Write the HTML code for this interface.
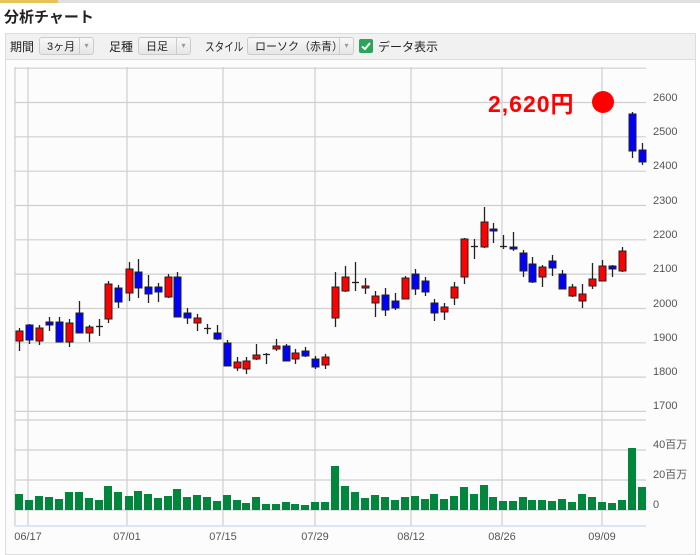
<!DOCTYPE html>
<html><head><meta charset="utf-8"><style>
body{margin:0;width:700px;height:548px;background:#fff;font-family:"Liberation Sans","Noto Sans CJK JP",sans-serif;overflow:hidden;position:relative}
.topbar{position:absolute;left:0;top:0;width:700px;height:3px;background:#e0e0e0}
.topbar i{position:absolute;left:0;top:0;width:58px;height:3px;background:#e8c35a}
h1{position:absolute;left:4px;top:6px;margin:0;font-size:15px;font-weight:bold;color:#222}
.panel{position:absolute;left:5px;top:33px;width:689px;height:520px;border:1px solid #ddd;background:#fcfcfc}
.tb{position:absolute;left:0;top:0;width:689px;height:25px;background:#f1f1f1;border-bottom:1px solid #ddd;font-size:12px;color:#222}
.tb span{position:absolute;top:4px;white-space:nowrap}
.dd{position:absolute;top:3px;height:18px;border:1px solid #ccc;border-radius:3px;background:linear-gradient(#f8f8f8,#e6e6e6);font-size:11px;line-height:18px;padding-left:7px;box-sizing:border-box;color:#222;white-space:nowrap}
.dd b{position:absolute;right:0;top:0;width:14px;height:16px;font-weight:normal;color:#999;font-size:8px;text-align:center;border-left:1px solid #ccc;box-sizing:border-box;line-height:16px}
.cb{position:absolute;left:353px;top:5px;width:14px;height:14px;background:#2aa55a;border-radius:2px}
</style></head><body>
<div class="topbar"><i></i></div>
<h1>分析チャート</h1>
<div class="panel">
<div class="tb">
<span style="left:4px">期間</span>
<div class="dd" style="left:33px;width:55px">3ヶ月<b>▾</b></div>
<span style="left:103px">足種</span>
<div class="dd" style="left:132px;width:53px">日足<b>▾</b></div>
<span style="left:199px;transform:scaleX(0.8);transform-origin:0 0">スタイル</span>
<div class="dd" style="left:241px;width:107px">ローソク（赤青）<b>▾</b></div>
<div class="cb"><svg width="14" height="14"><path d="M3 7.5 L6 10 L11 4" stroke="#fff" stroke-width="2" fill="none"/></svg></div>
<span style="left:372px">データ表示</span>
</div>
</div>
<svg id="c" width="700" height="548" style="position:absolute;left:0;top:0" font-family="Liberation Sans, sans-serif" font-size="11" fill="#555">
<g id="grid" stroke="#cfcfcf" stroke-width="1.2"></g>
<line x1="15" y1="526" x2="646" y2="526" stroke="#cfe0ee" stroke-width="1.5"/>
<g id="bars"></g>
<text x="653" y="101">2600</text><text x="653" y="135">2500</text><text x="653" y="169">2400</text>
<text x="653" y="204">2300</text><text x="653" y="238">2200</text><text x="653" y="272">2100</text>
<text x="653" y="307">2000</text><text x="653" y="341">1900</text><text x="653" y="375">1800</text>
<text x="653" y="409">1700</text>
<text x="653" y="448" font-family="Liberation Sans, Noto Sans CJK JP, sans-serif">40百万</text>
<text x="653" y="478" font-family="Liberation Sans, Noto Sans CJK JP, sans-serif">20百万</text>
<text x="653" y="508">0</text>
<text x="28" y="540" text-anchor="middle">06/17</text><text x="127" y="540" text-anchor="middle">07/01</text>
<text x="223" y="540" text-anchor="middle">07/15</text><text x="315" y="540" text-anchor="middle">07/29</text>
<text x="411" y="540" text-anchor="middle">08/12</text><text x="502" y="540" text-anchor="middle">08/26</text>
<text x="602" y="540" text-anchor="middle">09/09</text>
<text x="488" y="112" fill="#f00" font-size="23" font-weight="bold" letter-spacing="1" font-family="Liberation Sans, Noto Sans CJK JP, sans-serif">2,620円</text>
<circle cx="603" cy="102" r="11" fill="#f00"/>
</svg>
<script>
var ns="http://www.w3.org/2000/svg",g=document.getElementById('grid'),b=document.getElementById('bars');
function el(p,t,a){var e=document.createElementNS(ns,t);for(var k in a)e.setAttribute(k,a[k]);p.appendChild(e);return e;}
[68.2,102.5,136.8,171.2,205.5,239.8,274.1,308.5,342.8,377.1,411.4,420,450,480,510].forEach(function(y){el(g,'line',{x1:15,x2:646,y1:y,y2:y});});
[28,127,223,315,411,502,602].forEach(function(x){el(g,'line',{x1:x,x2:x,y1:67,y2:526});});
el(g,'line',{x1:15,x2:15,y1:67,y2:526});
var d=[[19,331,341,328,351,'r'],[29,325,340,324,344,'b'],[39,328,341,325,345,'r'],[49,322,325,317,331,'b'],[59,322,342,317,342,'b'],[69,323,342,319,347,'r'],[79,313,333,301,333,'b'],[89,327,333,325,342,'r'],[99,326,326,319,336,'x'],[108,284,319,281,323,'r'],[118,288,302,285,308,'b'],[129,269,293,262,301,'r'],[138,272,288,259,298,'b'],[148,287,294,275,303,'b'],[158,287,292,283,302,'b'],[168,277,297,274,298,'r'],[177,277,317,272,317,'b'],[187,313,318,308,324,'b'],[197,318,323,314,331,'r'],[207,328,328,324,334,'x'],[217,333,339,325,340,'b'],[227,343,366,340,366,'b'],[237,362,368,357,371,'r'],[246,361,369,357,374,'r'],[256,355,359,344,360,'r'],[266,354,354,353,364,'x'],[276,346,349,339,351,'r'],[286,346,361,344,361,'b'],[295,353,359,349,364,'r'],[305,351,356,347,357,'b'],[315,359,367,356,369,'b'],[325,357,365,354,369,'r'],[335,287,318,272,327,'r'],[345,277,291,266,292,'r'],[355,282,282,262,291,'x'],[365,286,287,278,294,'r'],[375,296,303,291,317,'r'],[385,295,310,288,316,'b'],[395,301,308,293,310,'b'],[405,278,299,276,299,'r'],[415,274,289,269,295,'b'],[425,281,292,277,296,'b'],[434,303,313,299,321,'b'],[444,307,312,303,320,'r'],[454,287,298,282,305,'r'],[464,239,277,238,284,'r'],[474,246,246,239,259,'x'],[484,222,247,207,248,'r'],[493,229,231,223,243,'b'],[503,246,246,235,249,'x'],[513,247,249,232,251,'b'],[523,253,271,250,277,'b'],[532,264,282,257,283,'b'],[542,267,277,265,287,'r'],[552,261,268,255,276,'b'],[562,274,289,270,289,'b'],[572,287,296,284,297,'r'],[582,294,301,284,308,'r'],[592,279,286,263,289,'r'],[602,266,281,260,281,'r'],[612,266,269,265,277,'b'],[622,251,271,247,272,'r'],[632,114,151,112,158,'b'],[642,150,162,143,165,'b']];
var v=[494,500,496,497,499,492,492,498,500,486,492,496,491,494,498,496,489,497,495,497,501,495,500,503,497,504,504,502,504,505,502,502,466,486,492,498,495,497,500,497,496,499,494,499,496,487,494,485,497,501,501,497,500,500,501,499,502,494,497,502,503,500,448,487];
d.forEach(function(c,i){var x=c[0];
el(b,'rect',{x:x-4,y:v[i],width:8,height:510-v[i],fill:'#00873c'});
el(b,'line',{x1:x+0.5,x2:x+0.5,y1:c[3],y2:c[4],stroke:'#222','stroke-width':1.3});
if(c[5]=='x'){el(b,'line',{x1:x-3,x2:x+4,y1:c[1]+0.5,y2:c[1]+0.5,stroke:'#222','stroke-width':1.3});}
else el(b,'rect',{x:x-3,y:c[1],width:7,height:Math.max(2,c[2]-c[1]),fill:c[5]=='r'?'#f00':'#00f',stroke:'#222','stroke-width':1});
});
</script>
</body></html>
